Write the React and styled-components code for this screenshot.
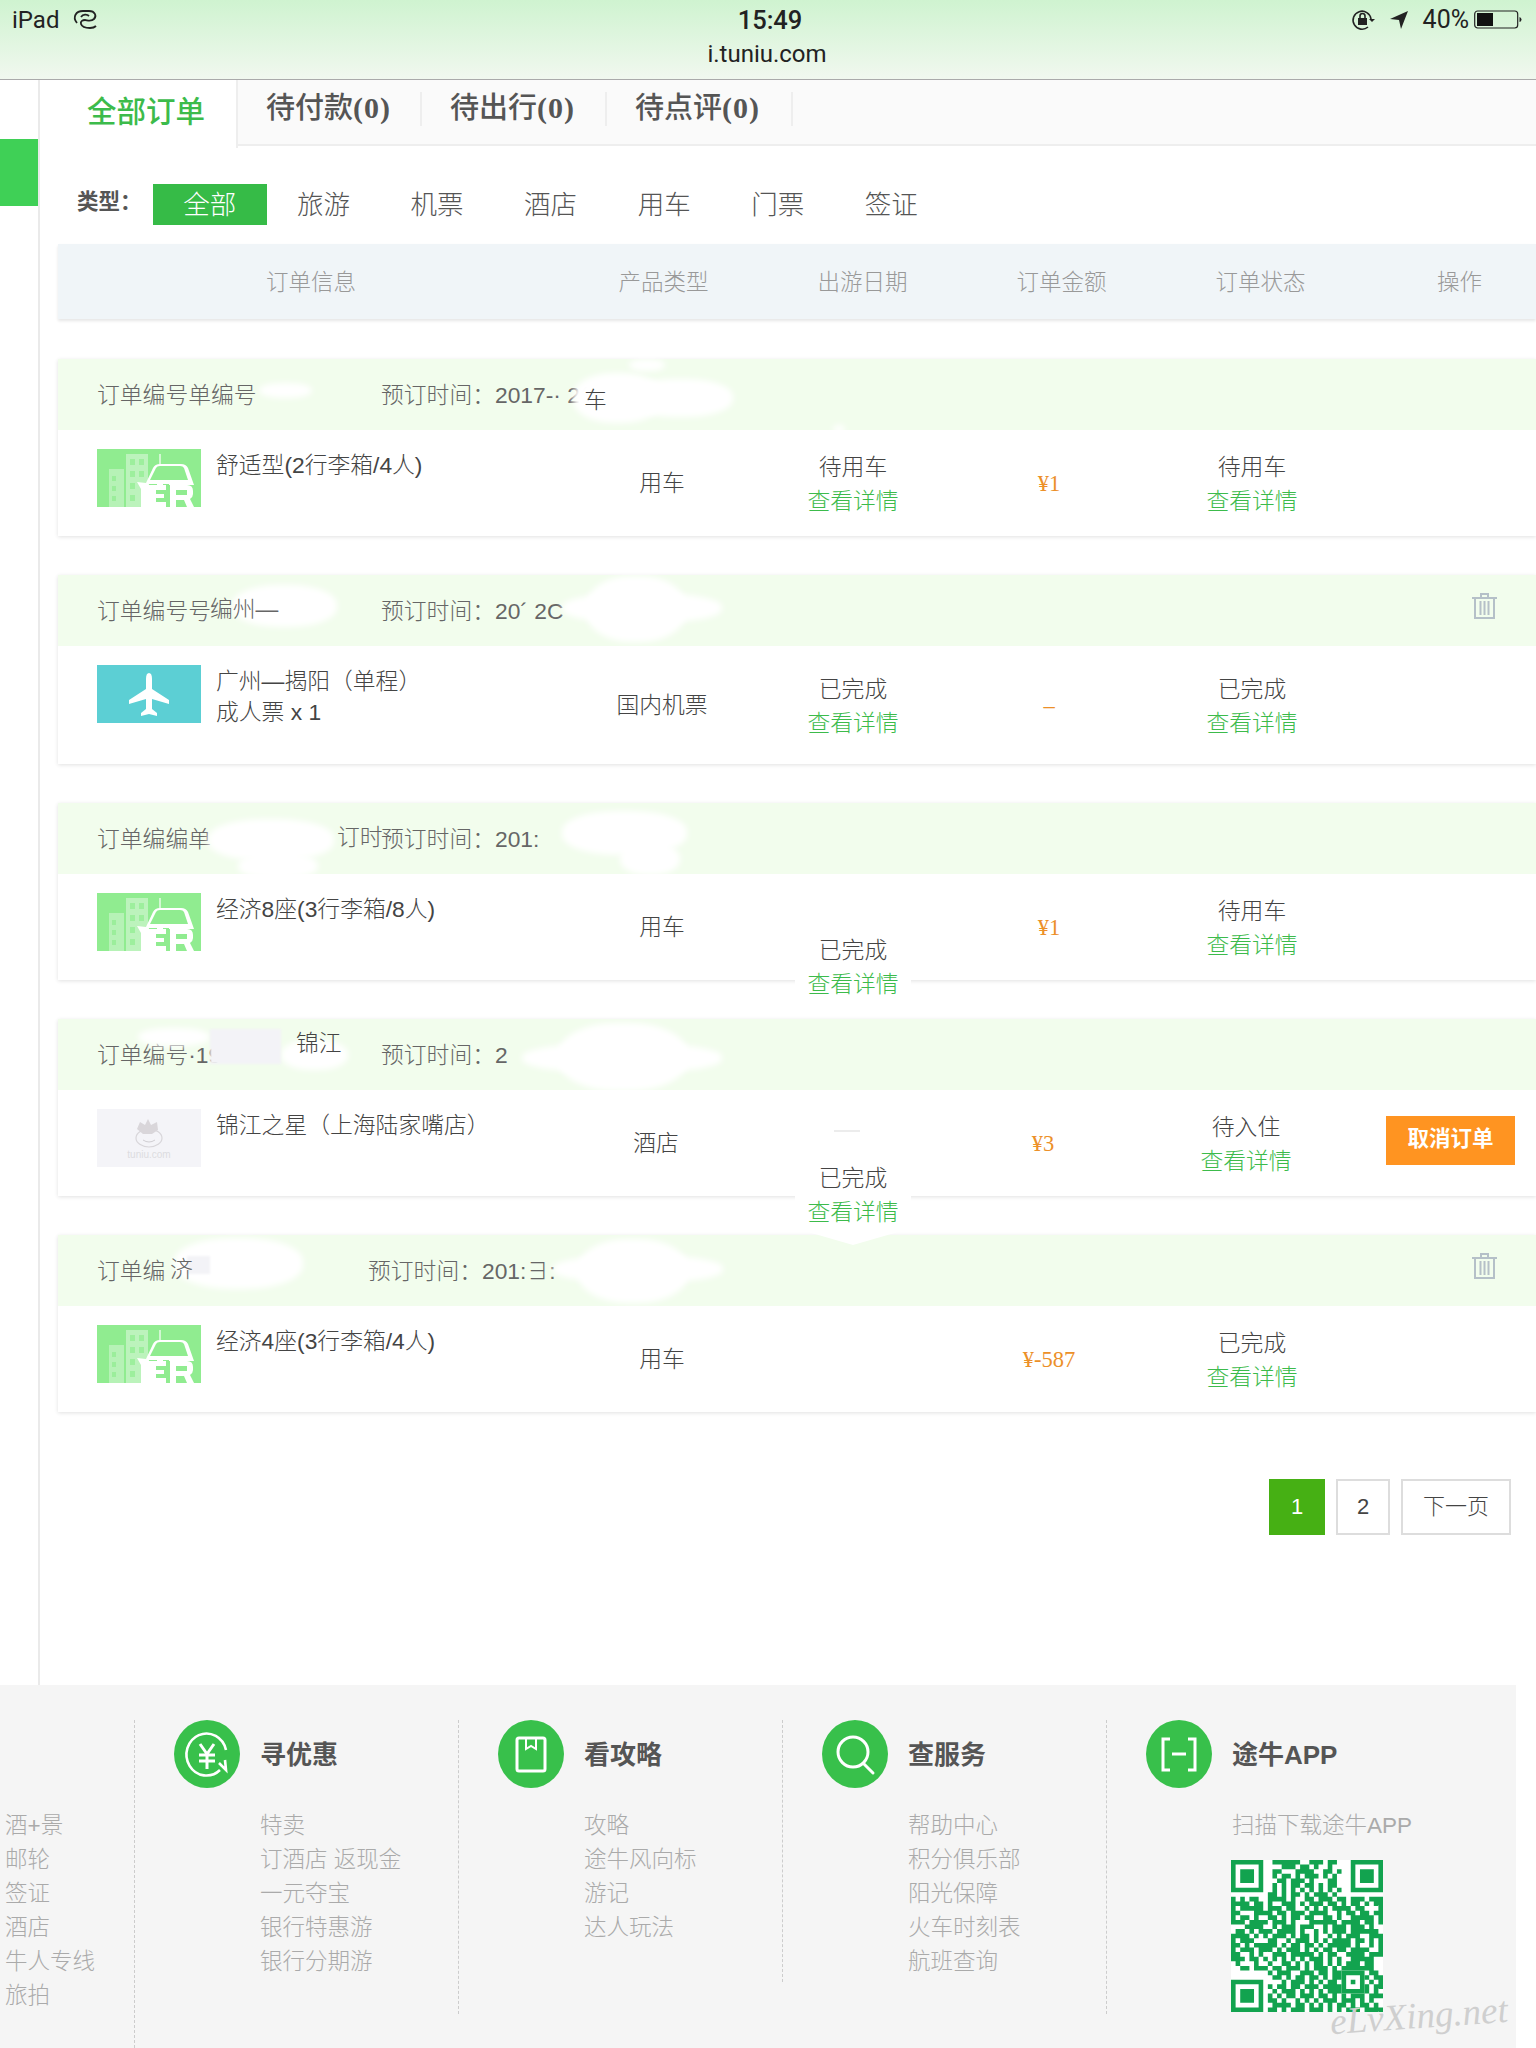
import React from 'react'
import styled, { createGlobalStyle } from 'styled-components'

const sans = `"Liberation Sans", "Noto Sans CJK SC", sans-serif`
const serif = `"Liberation Serif", "Noto Sans CJK SC", serif`
const green = '#3cbb4b'

const Global = createGlobalStyle`
  html, body { margin: 0; padding: 0; background: #fff; }
  * { box-sizing: border-box; }
`

const Page = styled.div`
  width: 1536px;
  height: 2048px;
  overflow: hidden;
  font-family: ${sans};
  font-weight: 300;
  color: #444;
  background: #fff;
`

const StatusBar = styled.div`
  height: 80px;
  border-bottom: 1px solid #aaa;
  background: linear-gradient(#cff3d0, #f1f8ef);
  display: grid;
  grid-template-columns: 1fr 1fr 1fr;
  padding: 8px 14px 0 12px;
  color: #222;
  font-family: Roboto, sans-serif;
  font-size: 24px;
  font-weight: 400;
`
const StatusLeft = styled.div`
  display: flex;
  align-items: flex-start;
  gap: 13px;
  line-height: 24px;
`
const StatusMid = styled.div`
  text-align: center;
  line-height: 24px;
`
const Clock = styled.div`
  font-size: 25.5px;
  font-weight: 500;
  margin-bottom: 10px;
  margin-left: 6px;
`
const StatusRight = styled.div`
  display: flex;
  justify-content: flex-end;
  align-items: flex-start;
  gap: 9px;
  line-height: 24px;
  font-size: 25px;
`

const Main = styled.div`
  display: flex;
  height: 1605px;
`
const Rail = styled.div`
  width: 40px;
  flex: none;
  border-right: 2px solid #eaeaea;
  padding-top: 59px;
`
const RailMark = styled.div`
  height: 67px;
  background: #3fd056;
`
const Content = styled.div`
  margin-left: 18px;
  flex: 1;
  min-width: 0;
`

const TabBar = styled.div`
  display: flex;
  height: 66px;
  background: #fafafa;
  border-bottom: 2px solid #eee;
`
const ActiveTab = styled.div`
  width: 180px;
  height: 68px;
  background: #fff;
  border-right: 2px solid #eee;
  color: ${green};
  font-size: 29.5px;
  font-weight: 500;
  padding: 12px 0 0 29px;
  line-height: 40px;
`
const Tab = styled.div`
  width: ${p => p.$w}px;
  height: 34px;
  margin-top: 12px;
  border-right: 2px solid #eee;
  padding-left: 28px;
  line-height: 32px;
  font-size: 29px;
  font-weight: 500;
  color: #555;
  white-space: nowrap;
`
const Count = styled.span`
  font-family: ${serif};
  font-weight: 700;
  font-size: 30px;
  letter-spacing: 1px;
`

const TypeRow = styled.div`
  display: flex;
  height: 98px;
  padding: 38px 0 0 19px;
`
const TypeLabel = styled.div`
  width: 76px;
  font-size: 21.5px;
  font-weight: 700;
  line-height: 36px;
  color: #555;
`
const TypeItem = styled.div`
  width: 113.6px;
  height: 41px;
  line-height: 42px;
  text-align: center;
  font-size: 26.5px;
  color: ${p => (p.$on ? '#fff' : '#555')};
  background: ${p => (p.$on ? '#36bb47' : 'transparent')};
`

const TableHead = styled.div`
  display: grid;
  grid-template-columns: 506px repeat(5, 199px);
  height: 75px;
  padding-bottom: 4px;
  align-items: center;
  background: #f0f5f8;
  box-shadow: 0 2px 3px rgba(0, 0, 0, 0.1);
  color: #999;
  font-size: 22.5px;
  text-align: center;
  white-space: nowrap;
`

const List = styled.div`
  margin-top: 40px;
  display: flex;
  flex-direction: column;
  gap: 39px;
`
const Card = styled.div`
  position: relative;
  box-shadow: 0 1px 4px rgba(0, 0, 0, 0.12);
  background: #fff;
`
const CardHead = styled.div`
  height: 71px;
  background: #f2fded;
  display: flex;
  align-items: center;
  padding: 0 39px 2px;
  font-size: 22.8px;
  color: #666;
  white-space: nowrap;
`
const OrderId = styled.div`
  width: ${p => p.$w || 284}px;
  flex: none;
`
const Trash = styled.svg`
  margin-left: auto;
  margin-top: -8px;
`
const CardBody = styled.div`
  display: grid;
  grid-template-columns: ${p => 504 - (p.$shift || 0)}px 200px 182px 210px 196px 1fr;
  height: ${p => p.$h || 106}px;
  align-items: center;
  text-align: center;
  font-size: 22.8px;
  color: #444;
`
const Info = styled.div`
  align-self: start;
  padding: 19px 0 0 39px;
  display: flex;
  gap: 15px;
  text-align: left;
  line-height: 31px;
`
const Title = styled.div`
  padding-top: 1px;
`
const Kind = styled.div`
  margin-top: -3px;
`
const Thumb = styled.svg`
  width: 104px;
  height: 58px;
  flex: none;
  display: block;
`
const Amount = styled.div`
  font-family: ${serif};
  font-weight: 400;
  font-size: 22.5px;
  color: #ec9029;
  padding-top: 2px;
`
const Stack = styled.div`
  line-height: 34px;
  padding-top: 2px;
`
const Link = styled.div`
  color: ${green};
`
const CancelBtn = styled.div`
  width: 129px;
  height: 49px;
  margin-left: 42px;
  margin-top: -6px;
  line-height: 46px;
  background: #ff9421;
  color: #fff;
  font-size: 21.5px;
  font-weight: 700;
`
const Dash = styled.div`
  width: 26px;
  height: 2px;
  background: #ececec;
  margin: -24px auto 0;
`

// the white retouching over parts of the screenshot
const Smudge = styled.div`
  position: absolute;
  left: ${p => p.$x}px;
  top: ${p => p.$y}px;
  width: ${p => p.$w}px;
  height: ${p => p.$h}px;
  background: ${p => (p.$grey ? '#f3f3f7' : '#fff')};
  border-radius: ${p => (p.$grey ? '0' : '45%')};
  filter: blur(${p => (p.$grey ? '1px' : '3px')});
`
const Pasted = styled.div`
  position: absolute;
  left: ${p => p.$x}px;
  top: ${p => p.$y}px;
  font-size: 22.8px;
  line-height: 30px;
  color: ${p => p.$c || '#555'};
  white-space: nowrap;
`
const Floater = styled.div`
  position: absolute;
  z-index: 2;
  left: ${p => p.$x}px;
  top: ${p => p.$y}px;
  width: 116px;
  padding-bottom: ${p => (p.$tail ? 16 : 0)}px;
  background: #fff;
  clip-path: ${p => (p.$tail ? 'polygon(0 0, 100% 0, 100% 80%, 50% 100%, 0 80%)' : 'none')};
  text-align: center;
  font-size: 22.8px;
  line-height: 34px;
`

const Pager = styled.div`
  display: flex;
  justify-content: flex-end;
  gap: 11px;
  margin-top: 67px;
  padding-right: 25px;
`
const PageBtn = styled.div`
  height: 56px;
  width: ${p => p.$w}px;
  line-height: 52px;
  text-align: center;
  font-size: 22px;
  border: 2px solid ${p => (p.$on ? '#46b014' : '#ddd')};
  background: ${p => (p.$on ? '#46b014' : '#fff')};
  color: ${p => (p.$on ? '#fff' : '#444')};
`

const Footer = styled.div`
  position: relative;
  width: 1516px;
  height: 363px;
  background: #f5f5f5;
  display: flex;
  align-items: flex-start;
  padding-top: 35px;
`
const FirstCol = styled.div`
  width: 134px;
  flex: none;
  padding: 89px 0 0 5px;
`
const FootCol = styled.div`
  width: 324px;
  flex: none;
  height: ${p => p.$h}px;
  border-left: 1px dashed #ccc;
  padding: 0 0 0 39px;
`
const FootHead = styled.div`
  display: flex;
  align-items: center;
  gap: 20px;
  height: 68px;
  font-size: 26px;
  font-weight: 700;
  color: #555;
`
const HeadText = styled.div`
  margin-top: -3px;
`
const Circle = styled.svg`
  width: 66px;
  height: 68px;
  flex: none;
`
const FootList = styled.div`
  margin: 21px 0 0 86px;
`
const FootItem = styled.div`
  font-size: 22.5px;
  line-height: 34px;
  color: #aaa;
  white-space: nowrap;
`
const QrBox = styled.svg`
  display: block;
  width: 152px;
  height: 152px;
  margin: 17px 0 0 -1px;
`
const Watermark = styled.div`
  position: absolute;
  left: 1330px;
  top: 309px;
  font-family: ${serif};
  font-style: italic;
  font-size: 37px;
  color: #cfcfcf;
  transform: rotate(-4deg);
  white-space: nowrap;
`

function CarThumb() {
  return (
    <Thumb viewBox="0 0 104 58">
      <rect width="104" height="58" fill="#90ec90" />
      <rect x="12" y="20" width="15" height="38" fill="#fff" opacity=".35" />
      <rect x="29" y="5" width="22" height="53" fill="#fff" opacity=".4" />
      <path d="M15 27h4v5h-4zM15 37h4v5h-4zM15 47h4v5h-4zM33 10h5v6h-5zM42 10h5v6h-5zM33 22h5v6h-5zM42 22h5v6h-5zM33 34h5v6h-5zM33 46h5v6h-5z" fill="#90ec90" opacity=".7" />
      <rect x="62" y="5" width="2" height="10" fill="#fff" opacity=".6" />
      <path d="M40 33l9 1 7-15q2-4 7-4h21q5 0 7 4l6 17H72v-1H66v1H60v-1H52l-1 6v17H44V40z" fill="#fff" />
      <path d="M53 31l6-12q1-2 4-2h20q3 0 4 2l4 12z" fill="#90ec90" />
      <path d="M50 36h19v5h-10v4h8v4h-8v4h10v5H50z" fill="#fff" />
      <path d="M73 36h17q6 0 6 6v3q0 3-3 5l4 8h-7l-3-7h-8v7h-6zM79 41v5h11v-5z" fill="#fff" fillRule="evenodd" />
    </Thumb>
  )
}

function PlaneThumb() {
  return (
    <Thumb viewBox="0 0 104 58">
      <rect width="104" height="58" fill="#5ccfd4" />
      <path d="M52 8q3 0 3 6v10l17 11v4l-17-5v10l5 4v3l-8-2-8 2v-3l5-4V34l-17 5v-4l17-11V14q0-6 3-6z" fill="#fff" />
    </Thumb>
  )
}

function CowThumb() {
  return (
    <Thumb viewBox="0 0 104 58">
      <rect width="104" height="58" fill="#f4f4f8" />
      <ellipse cx="52" cy="29" rx="13" ry="9" fill="none" stroke="#d8d6da" strokeWidth="1.2" />
      <path d="M40 20l3-7 5 3 3-6 3 6 6-3 1 8-6 4H46z" fill="#d9d6da" />
      <path d="M46 31q6 4 12 0" fill="none" stroke="#d0ced2" />
      <text x="52" y="49" textAnchor="middle" fontSize="10" fill="#dcdce0" fontFamily="Liberation Sans">tuniu.com</text>
    </Thumb>
  )
}

function TrashIcon() {
  return (
    <Trash width="25" height="26" viewBox="0 0 25 26" fill="none" stroke="#b5c0c8" strokeWidth="2">
      <path d="M0 5h25M9 5V1h7v4M3 5v20h19V5M8.500 8v14M12.500 8v14M16.500 8v14" />
    </Trash>
  )
}

const data = [
  {
    thumb: <CarThumb />, id: '订单编号单编号', time: '预订时间：2017-· 2(',
    title: ['舒适型(2行李箱/4人)'], kind: '用车', date: '待用车', amount: '¥1', state: '待用车',
    smudges: [[201, 24, 53, 15], [515, 14, 90, 50], [570, 20, 105, 38], [571, 0, 36, 12], [775, 66, 12, 8]],
    pasted: [{ x: 526, y: 26, t: '车', c: '#444' }],
  },
  {
    thumb: <PlaneThumb />, id: '订单编号号', time: '预订时间：20´ 2C', trash: true, h: 118,
    title: ['广州—揭阳（单程）', '成人票 x 1'], kind: '国内机票', date: '已完成', amount: '–', state: '已完成',
    smudges: [[174, 10, 105, 42], [504, 18, 160, 30], [528, 1, 100, 66]],
    pasted: [{ x: 152, y: 19, t: '编州—', c: '#666' }],
  },
  {
    thumb: <CarThumb />, id: '订单编编单', time: '预订时间：201:',
    title: ['经济8座(3行李箱/8人)'], kind: '用车', amount: '¥1', state: '待用车',
    smudges: [[150, 16, 126, 42], [180, 50, 80, 26], [504, 8, 125, 44], [562, 40, 60, 32]],
    pasted: [{ x: 279, y: 19, t: '订时', c: '#666' }],
    floater: { x: 737, y: 130 },
  },
  {
    thumb: <CowThumb />, id: '订单编号·19', time: '预订时间：2', shift: 6, dash: true, cancel: true,
    title: ['锦江之星（上海陆家嘴店）'], kind: '酒店', amount: '¥3', state: '待入住',
    smudges: [[80, 9, 72, 18], [223, 21, 67, 30], [464, 24, 200, 30], [500, 4, 130, 68]],
    grey: [152, 10, 71, 35],
    pasted: [{ x: 238, y: 9, t: '锦江', c: '#444' }],
    floater: { x: 737, y: 142, tail: true },
  },
  {
    thumb: <CarThumb />, id: '订单编', idW: 271, time: '预订时间：201:∃:', trash: true,
    title: ['经济4座(3行李箱/4人)'], kind: '用车', amount: '¥-587', state: '已完成',
    smudges: [[116, 3, 129, 51], [495, 20, 170, 28], [520, 4, 110, 64]],
    grey: [129, 21, 23, 18],
    pasted: [{ x: 112, y: 19, t: '济', c: '#666' }],
  },
]

function Order({ o }) {
  return (
    <Card>
      <CardHead>
        <OrderId $w={o.idW}>{o.id}</OrderId>
        <div>{o.time}</div>
        {o.trash && <TrashIcon />}
      </CardHead>
      <CardBody $h={o.h} $shift={o.shift}>
        <Info>
          {o.thumb}
          <Title>{o.title.map(t => <div key={t}>{t}</div>)}</Title>
        </Info>
        <Kind>{o.kind}</Kind>
        {o.date ? (
          <Stack>{o.date}<Link>查看详情</Link></Stack>
        ) : (
          o.dash ? <Dash /> : <div />
        )}
        <Amount>{o.amount}</Amount>
        <Stack>{o.state}<Link>查看详情</Link></Stack>
        {o.cancel ? <CancelBtn>取消订单</CancelBtn> : <div />}
      </CardBody>
      {o.smudges.map(s => <Smudge key={s.join()} $x={s[0]} $y={s[1]} $w={s[2]} $h={s[3]} />)}
      {o.grey && <Smudge $grey $x={o.grey[0]} $y={o.grey[1]} $w={o.grey[2]} $h={o.grey[3]} />}
      {o.pasted && o.pasted.map(p => <Pasted key={p.t} $x={p.x} $y={p.y} $c={p.c}>{p.t}</Pasted>)}
      {o.floater && (
        <Floater $x={o.floater.x} $y={o.floater.y} $tail={o.floater.tail}>
          已完成<Link>查看详情</Link>
        </Floater>
      )}
    </Card>
  )
}

const qrRows = [
  '.........######..###.##..........',
  '...........###.##.#..#...........',
  '.........##...####..##.#.........',
  '.........#.##.#.###.#.#..........',
  '..........##.###.#...##..........',
  '.........#.#.##.##.#.##..........',
  '.........#.#.#.#.#.#.#.#.........',
  '........##.#.##.#.###.#..........',
  '#.#.##..####.#..##.###.##.###.###',
  '####.##.#..###.#.###.##.#.##.#.##',
  '#.#####.###.##..#.#.#.####.##...#',
  '##...####.##.###.####..#.##.##.##',
  '#.##.#..##.#.##.##..##.#..#####.#',
  '###.####.###.#...######.####.##.#',
  '...####..#.###.###..#.###.###.#..',
  '.##.#.###.####.#..#.#.###.######.',
  '####.#.#.###.#.##.#..#.#.###..###',
  '#.###...##..#.###.#.#.####.##.#.#',
  '##.#.#####.#.##.##.#.#####.#..#.#',
  '#.###.###.#.###.#.#.##.##.####..#',
  '##..#.#..###.#####.#.##..####.###',
  '###.##.#.#.#.#.#.###.#.#..#####..',
  '.#...#..#..##.#.#.##.#.#.###.##..',
  '..##.###.##.###.#.###.#.#######..',
  '........#.###..###.##.###...#.##.',
  '.........##.#.##.##.#.##.#...#.##',
  '...........#.###.#.#.##.#.#.#.#.#',
  '........#.##.##.###.####.#...#.##',
  '.........#.###.#.#.#.###.#####.#.',
  '........#.#.##.###.##.#.#.###.###',
  '........##.#..#.#.#.###.###.#.#..',
  '.........####.##.#.#.#.##.#.##.#.',
  '........##.#.###.###.#.#.###.####',
]

function finder(x, y) {
  return `M${x} ${y}h7v7h-7zM${x + 1} ${y + 1}v5h5v-5zM${x + 2} ${y + 2}h3v3h-3z`
}

function QrCode() {
  let cells = ''
  qrRows.forEach((row, y) => {
    for (let x = 0; x < 33; x++) {
      const inAlign = x >= 24 && x <= 28 && y >= 24 && y <= 28
      if (!inAlign && row[x] === '#') cells += `M${x} ${y}h1v1h-1z`
    }
  })
  return (
    <QrBox viewBox="0 0 33 33">
      <rect width="33" height="33" fill="#fff" />
      <path d={cells} fill="#12a34f" />
      <path d={finder(0, 0) + finder(26, 0) + finder(0, 26) + 'M24 24h5v5h-5zM25 25v3h3v-3zM26 26h1v1h-1z'} fill="#12a34f" fillRule="evenodd" />
    </QrBox>
  )
}

const footCols = [
  {
    title: '寻优惠', h: 328, items: ['特卖', '订酒店 返现金', '一元夺宝', '银行特惠游', '银行分期游'],
    icon: (
      <g fill="none" stroke="#fff" strokeWidth="2.600">
        <path d="M52 30A20 21 0 1 0 46 50" />
        <path d="M45 43l7 7-1-10" strokeWidth="2.600" />
        <path d="M26 24l7 10 7-10M25 35h16M25 41h16M33 34v15" strokeWidth="3" />
      </g>
    ),
  },
  {
    title: '看攻略', h: 294, items: ['攻略', '途牛风向标', '游记', '达人玩法'],
    icon: (
      <g fill="none" stroke="#fff" strokeWidth="3">
        <rect x="19" y="18" width="28" height="33" rx="2" />
        <path d="M28 18v11l5-3 5 3V18" strokeWidth="2" />
      </g>
    ),
  },
  {
    title: '查服务', h: 262, items: ['帮助中心', '积分俱乐部', '阳光保障', '火车时刻表', '航班查询'],
    icon: (
      <g fill="none" stroke="#fff" strokeWidth="3">
        <circle cx="31" cy="32" r="15" />
        <path d="M42 44l9 9" strokeLinecap="round" />
      </g>
    ),
  },
]

export default function App() {
  return (
    <Page>
      <Global />
      <StatusBar>
        <StatusLeft>
          iPad
          <svg width="26" height="22" viewBox="0 0 26 22" fill="none" stroke="#222" strokeWidth="1.800">
            <path d="M5 15C0 9 4 3 11 3h6c6 0 8 5 5 8s-7 1-9 1-5 1-4 4 4 4 9 4c3 0 5-1 6-2" />
            <path d="M9 9c2-3 6-3 8-1" />
          </svg>
        </StatusLeft>
        <StatusMid>
          <Clock>15:49</Clock>
          i.tuniu.com
        </StatusMid>
        <StatusRight>
          <svg width="24" height="24" viewBox="0 0 24 24" fill="none" stroke="#222" strokeWidth="1.600">
            <path d="M20 11A9 9 0 1 0 17 19" />
            <path d="M18 11h6l-3 3z" fill="#222" stroke="none" />
            <rect x="7" y="10" width="9" height="7" fill="#222" stroke="none" />
            <path d="M9 10V8a2.500 2.500 0 0 1 5 0v2" />
          </svg>
          <svg width="20" height="22" viewBox="0 0 20 22" style={{ marginLeft: 5 }}>
            <path d="M19 3L1 11l9 1 2 9z" fill="#222" />
          </svg>
          <span style={{ marginLeft: 5 }}>40%</span>
          <svg width="48" height="22" viewBox="0 0 48 22" style={{ marginLeft: -4, marginTop: 1 }}>
            <rect x=".7" y="2" width="43" height="17" rx="3" fill="none" stroke="#222" strokeWidth="1.200" />
            <rect x="3" y="4" width="16" height="13" fill="#111" />
            <path d="M45.500 8q2 .5 2 2.500t-2 2.500z" fill="#222" />
          </svg>
        </StatusRight>
      </StatusBar>

      <Main>
        <Rail><RailMark /></Rail>
        <Content>
          <TabBar>
            <ActiveTab>全部订单</ActiveTab>
            <Tab $w={184}>待付款<Count>(0)</Count></Tab>
            <Tab $w={185}>待出行<Count>(0)</Count></Tab>
            <Tab $w={186}>待点评<Count>(0)</Count></Tab>
          </TabBar>
          <TypeRow>
            <TypeLabel>类型：</TypeLabel>
            <TypeItem $on>全部</TypeItem>
            <TypeItem>旅游</TypeItem>
            <TypeItem>机票</TypeItem>
            <TypeItem>酒店</TypeItem>
            <TypeItem>用车</TypeItem>
            <TypeItem>门票</TypeItem>
            <TypeItem>签证</TypeItem>
          </TypeRow>
          <TableHead>
            <div>订单信息</div>
            <div>产品类型</div>
            <div>出游日期</div>
            <div>订单金额</div>
            <div>订单状态</div>
            <div>操作</div>
          </TableHead>
          <List>
            {data.map((o, i) => <Order key={i} o={o} />)}
          </List>
          <Pager>
            <PageBtn $on $w={56}>1</PageBtn>
            <PageBtn $w={54}>2</PageBtn>
            <PageBtn $w={110}>下一页</PageBtn>
          </Pager>
        </Content>
      </Main>

      <Footer>
        <FirstCol>
          {['酒+景', '邮轮', '签证', '酒店', '牛人专线', '旅拍'].map(t => <FootItem key={t}>{t}</FootItem>)}
        </FirstCol>
        {footCols.map(c => (
          <FootCol key={c.title} $h={c.h}>
            <FootHead>
              <Circle viewBox="0 0 66 68">
                <ellipse cx="33" cy="34" rx="33" ry="34" fill="#38c04b" />
                {c.icon}
              </Circle>
              <HeadText>{c.title}</HeadText>
            </FootHead>
            <FootList>
              {c.items.map(t => <FootItem key={t}>{t}</FootItem>)}
            </FootList>
          </FootCol>
        ))}
        <FootCol $h={294}>
          <FootHead>
            <Circle viewBox="0 0 66 68">
              <ellipse cx="33" cy="34" rx="33" ry="34" fill="#38c04b" />
              <path d="M24 19h-7v31h7M42 19h7v31h-7M26 34h14" fill="none" stroke="#fff" strokeWidth="3" />
            </Circle>
            <HeadText>途牛APP</HeadText>
          </FootHead>
          <FootList>
            <FootItem>扫描下载途牛APP</FootItem>
            <QrCode />
          </FootList>
        </FootCol>
        <Watermark>eLvXing.net</Watermark>
      </Footer>
    </Page>
  )
}
